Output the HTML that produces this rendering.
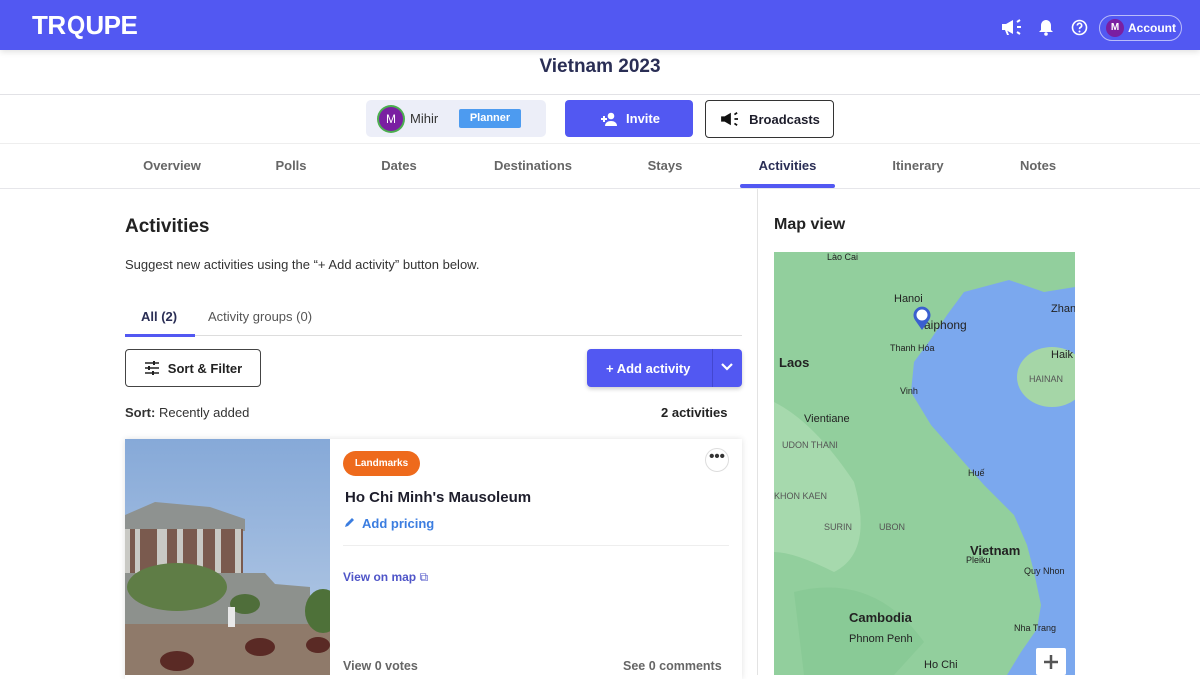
<!DOCTYPE html>
<html><head><meta charset="utf-8"><style>
*{box-sizing:border-box;margin:0;padding:0}
body{width:1200px;height:675px;overflow:hidden;background:#fff;font-family:"Liberation Sans",sans-serif;color:#1d1d2b;position:relative}
.abs{position:absolute}
.hdr{left:0;top:0;width:1200px;height:50px;background:#5258f2;box-shadow:0 2px 6px rgba(0,0,0,.12)}
.logo{left:32px;top:12px;color:#fff;font-weight:bold;font-size:26px;line-height:26px;letter-spacing:-0.5px}
.acct{left:1099px;top:15px;width:83px;height:26px;border:1.5px solid rgba(255,255,255,.6);border-radius:14px;color:#fff;font-size:12px;font-weight:bold}
.av{border-radius:50%;background:#7a1fa2;color:#fff;text-align:center;font-weight:bold}
.tab{top:158px;font-size:13px;font-weight:bold;color:#666;text-align:center}
.btn{border-radius:4px;font-size:13px;font-weight:bold;display:flex;align-items:center;justify-content:center}
</style></head><body>
<div class="abs hdr"></div>
<div class="abs logo">TR<span style="display:inline-block;transform:scaleX(.9)">Q</span>UPE</div>
<svg class="abs" style="left:1000px;top:18px" width="24" height="18" viewBox="0 0 24 18"><path d="M2 6h4l7-4v14l-7-4H2z" fill="#fff"/><path d="M5 12l2 5h2l-2-5" fill="#fff"/><path d="M17 4l3-2M17 9h4M17 14l3 2" stroke="#fff" stroke-width="2"/></svg>
<svg class="abs" style="left:1038px;top:19px" width="16" height="17" viewBox="0 0 16 17"><path d="M8 1c3 0 5 2.5 5 5.5V11l2 2H1l2-2V6.5C3 3.5 5 1 8 1z" fill="#fff"/><circle cx="8" cy="15" r="1.8" fill="#fff"/></svg>
<svg class="abs" style="left:1071px;top:19px" width="17" height="17" viewBox="0 0 17 17"><circle cx="8.5" cy="8.5" r="7" fill="none" stroke="#fff" stroke-width="1.6"/><path d="M6.3 6.5a2.2 2.2 0 1 1 3 2c-.7.4-.8.8-.8 1.6" fill="none" stroke="#fff" stroke-width="1.6"/><circle cx="8.5" cy="12.5" r="1" fill="#fff"/></svg>
<div class="abs acct"><div class="abs av" style="left:6px;top:3px;width:18px;height:18px;font-size:10px;line-height:18px">M</div><span class="abs" style="left:28px;top:5px">Account</span></div>

<div class="abs" style="left:0;top:56px;width:1200px;text-align:center;font-size:19px;font-weight:bold;color:#2a2e55">Vietnam 2023</div>
<div class="abs" style="left:0;top:94px;width:1200px;height:1px;background:#e2e2e6"></div>
<div class="abs" style="left:366px;top:100px;width:180px;height:37px;background:#eceef8;border-radius:5px"></div>
<div class="abs av" style="left:379px;top:107px;width:24px;height:24px;line-height:24px;font-size:12px;font-weight:normal;box-shadow:0 0 0 2px #4caf50">M</div>
<div class="abs" style="left:410px;top:111px;font-size:13px;color:#333">Mihir</div>
<div class="abs" style="left:459px;top:109px;width:62px;height:19px;background:#4d9bf0;color:#fff;font-size:11px;font-weight:bold;text-align:center;line-height:19px;border-radius:2px">Planner</div>
<div class="abs btn" style="left:565px;top:100px;width:128px;height:37px;background:#5258f2;color:#fff"><svg width="20" height="14" viewBox="0 0 20 14" style="margin-right:8px"><path d="M3 7h6M6 4v6" stroke="#fff" stroke-width="2"/><circle cx="13" cy="4" r="3.3" fill="#fff"/><path d="M7 14c0-3.5 3-5 6-5s6 1.5 6 5z" fill="#fff"/></svg>Invite</div>
<div class="abs btn" style="left:705px;top:100px;width:129px;height:38px;border:1px solid #333;color:#1d1d2b"><svg width="22" height="16" viewBox="0 0 24 18" style="margin-right:8px"><path d="M2 6h4l7-4v14l-7-4H2z" fill="#111"/><path d="M17 4l3-2M17 9h4M17 14l3 2" stroke="#111" stroke-width="2"/></svg>Broadcasts</div>
<div class="abs" style="left:0;top:143px;width:1200px;height:1px;background:#eee"></div>
<div class="abs tab" style="left:132px;width:80px">Overview</div>
<div class="abs tab" style="left:261px;width:60px">Polls</div>
<div class="abs tab" style="left:369px;width:60px">Dates</div>
<div class="abs tab" style="left:483px;width:100px">Destinations</div>
<div class="abs tab" style="left:635px;width:60px">Stays</div>
<div class="abs tab" style="left:740px;width:95px;color:#2a2e55">Activities</div>
<div class="abs tab" style="left:878px;width:80px">Itinerary</div>
<div class="abs tab" style="left:1008px;width:60px">Notes</div>
<div class="abs" style="left:0;top:188px;width:1200px;height:1px;background:#e6e6ea"></div>
<div class="abs" style="left:740px;top:184px;width:95px;height:4px;background:#5258f2;border-radius:2px"></div>
<div class="abs" style="left:757px;top:189px;width:1px;height:486px;background:#e3e3e3"></div>

<div class="abs" style="left:125px;top:216px;font-size:19px;font-weight:bold;color:#222">Activities</div>
<div class="abs" style="left:125px;top:257px;font-size:13px;color:#333">Suggest new activities using the “+ Add activity” button below.</div>
<div class="abs" style="left:141px;top:309px;font-size:13px;font-weight:bold;color:#2a2e55">All (2)</div>
<div class="abs" style="left:208px;top:309px;font-size:13px;color:#555">Activity groups (0)</div>
<div class="abs" style="left:125px;top:335px;width:617px;height:1px;background:#ddd"></div>
<div class="abs" style="left:125px;top:334px;width:70px;height:3px;background:#5258f2"></div>
<div class="abs btn" style="left:125px;top:349px;width:136px;height:38px;border:1px solid #444;color:#222"><svg width="16" height="14" viewBox="0 0 16 14" style="margin-right:8px"><path d="M1 2h14M1 7h14M1 12h14" stroke="#222" stroke-width="1.5"/><path d="M10 0v4M5 5v4M9 10v4" stroke="#222" stroke-width="2"/></svg>Sort &amp; Filter</div>
<div class="abs btn" style="left:587px;top:349px;width:155px;height:38px;background:#5258f2;color:#fff;box-shadow:0 2px 4px rgba(0,0,0,.2);justify-content:flex-start;padding-left:19px">+ Add activity</div>
<div class="abs" style="left:712px;top:349px;width:1px;height:38px;background:#4347d0"></div>
<svg class="abs" style="left:720px;top:362px" width="14" height="10" viewBox="0 0 14 10"><path d="M2 2l5 5 5-5" stroke="#fff" stroke-width="2.2" fill="none"/></svg>
<div class="abs" style="left:125px;top:405px;font-size:13px;color:#333"><b>Sort:</b> Recently added</div>
<div class="abs" style="left:661px;top:405px;font-size:13px;font-weight:bold;color:#222">2 activities</div>

<div class="abs" style="left:125px;top:439px;width:617px;height:240px;box-shadow:0 0 6px rgba(0,0,0,.12);background:#fff"></div>
<svg class="abs" style="left:125px;top:439px" width="205" height="236" viewBox="0 0 205 236">
<defs><linearGradient id="sk" x1="0" y1="0" x2="0" y2="1"><stop offset="0" stop-color="#86a9d8"/><stop offset="1" stop-color="#b9cde6"/></linearGradient></defs>
<rect width="205" height="236" fill="url(#sk)"/>
<path d="M0 76L30 63 85 68 120 80 120 92 0 92z" fill="#8e9290"/>
<rect x="0" y="90" width="118" height="45" fill="#7a5a4e"/>
<g fill="#c9c9c4"><rect x="0" y="90" width="5" height="45"/><rect x="10" y="90" width="5" height="45"/><rect x="32" y="90" width="10" height="45"/><rect x="52" y="90" width="6" height="45"/><rect x="72" y="90" width="6" height="45"/><rect x="90" y="90" width="6" height="45"/><rect x="110" y="90" width="6" height="45"/></g>
<path d="M0 134H140L150 145 185 148 185 185 0 185z" fill="#8d918d"/>
<path d="M0 185H205V236H0z" fill="#8f7a6a"/>
<ellipse cx="52" cy="148" rx="50" ry="24" fill="#5f7d46"/>
<ellipse cx="120" cy="165" rx="15" ry="10" fill="#4f6e3a"/>
<ellipse cx="198" cy="172" rx="18" ry="22" fill="#4e7139"/>
<ellipse cx="52" cy="222" rx="17" ry="10" fill="#5a2a25"/>
<ellipse cx="135" cy="208" rx="15" ry="9" fill="#5a2a25"/>
<ellipse cx="193" cy="206" rx="12" ry="8" fill="#5a2a25"/>
<rect x="103" y="168" width="7" height="20" fill="#e8e8e8"/>
</svg>
<div class="abs" style="left:343px;top:451px;width:77px;height:25px;background:#ee6a1c;color:#fff;font-size:10px;font-weight:bold;border-radius:13px;text-align:center;line-height:25px">Landmarks</div>
<div class="abs" style="left:705px;top:448px;width:24px;height:24px;border:1px solid #ddd;border-radius:50%;text-align:center;font-size:15px;line-height:16px;font-weight:bold;color:#333">•••</div>
<div class="abs" style="left:345px;top:489px;font-size:15px;font-weight:bold;color:#1d1d2b">Ho Chi Minh's Mausoleum</div>
<svg class="abs" style="left:344px;top:517px" width="11" height="11" viewBox="0 0 11 11"><path d="M1 10l1-3 6-6 2 2-6 6z" fill="#3b7de0"/></svg>
<div class="abs" style="left:362px;top:516px;font-size:13px;color:#3b7de0;font-weight:bold">Add pricing</div>
<div class="abs" style="left:343px;top:545px;width:386px;height:1px;background:#eee"></div>
<div class="abs" style="left:343px;top:570px;font-size:12px;color:#4f55c8;font-weight:bold">View on map <span style="font-weight:normal">⧉</span></div>
<div class="abs" style="left:343px;top:659px;font-size:12.5px;color:#666;font-weight:bold">View 0 votes</div>
<div class="abs" style="left:623px;top:659px;font-size:12.5px;color:#666;font-weight:bold">See 0 comments</div>

<div class="abs" style="left:774px;top:216px;font-size:16px;font-weight:bold;color:#222">Map view</div>
<svg class="abs" style="left:774px;top:252px;font-family:'Liberation Sans',sans-serif" width="301" height="423" viewBox="0 0 301 423">
<rect width="301" height="423" fill="#92cf9d"/>
<path d="M0 150Q40 170 80 230 100 300 60 320 20 300 0 300z" fill="#b4dfb7" opacity=".6"/>
<path d="M20 340Q100 320 150 390L120 423H30z" fill="#86c793" opacity=".7"/>
<path d="M190 40L235 28 270 40 301 35V423H233L247 400 263 377 267 353 260 320 253 293 240 263 210 233 187 207 157 173 137 140 140 110 157 87 173 63z" fill="#7ba8ee"/>
<ellipse cx="278" cy="125" rx="35" ry="30" fill="#a5d6a7"/>
<g font-size="11" fill="#222"><text x="120" y="50">Hanoi</text><text x="150" y="77" font-size="12">aiphong</text><text x="5" y="115" font-weight="bold" font-size="13">Laos</text><text x="30" y="170">Vientiane</text><text x="196" y="303" font-weight="bold" font-size="13">Vietnam</text><text x="75" y="370" font-weight="bold" font-size="13">Cambodia</text><text x="75" y="390">Phnom Penh</text><text x="150" y="416">Ho Chi</text><text x="277" y="60">Zhan</text><text x="277" y="106">Haik</text><text x="8" y="196" font-size="9" fill="#555">UDON THANI</text><text x="0" y="247" font-size="9" fill="#555">KHON KAEN</text><text x="50" y="278" font-size="9" fill="#555">SURIN</text><text x="105" y="278" font-size="9" fill="#555">UBON</text><text x="255" y="130" font-size="9" fill="#555">HAINAN</text><text x="194" y="224" font-size="9">Huế</text><text x="192" y="311" font-size="9">Pleiku</text><text x="250" y="322" font-size="9">Quy Nhon</text><text x="240" y="379" font-size="9">Nha Trang</text><text x="53" y="8" font-size="9">Lào Cai</text><text x="116" y="99" font-size="9">Thanh Hóa</text><text x="126" y="142" font-size="9">Vinh</text></g>
<path d="M148 78L141 68A8.5 8.5 0 1 1 155 68z" fill="#3a5fcf"/><circle cx="148" cy="63" r="5.5" fill="#fff"/>
<rect x="262" y="396" width="30" height="27" fill="#fff" rx="2"/><path d="M277 403v14M270 410h14" stroke="#555" stroke-width="2.5"/>
</svg>
</body></html>
